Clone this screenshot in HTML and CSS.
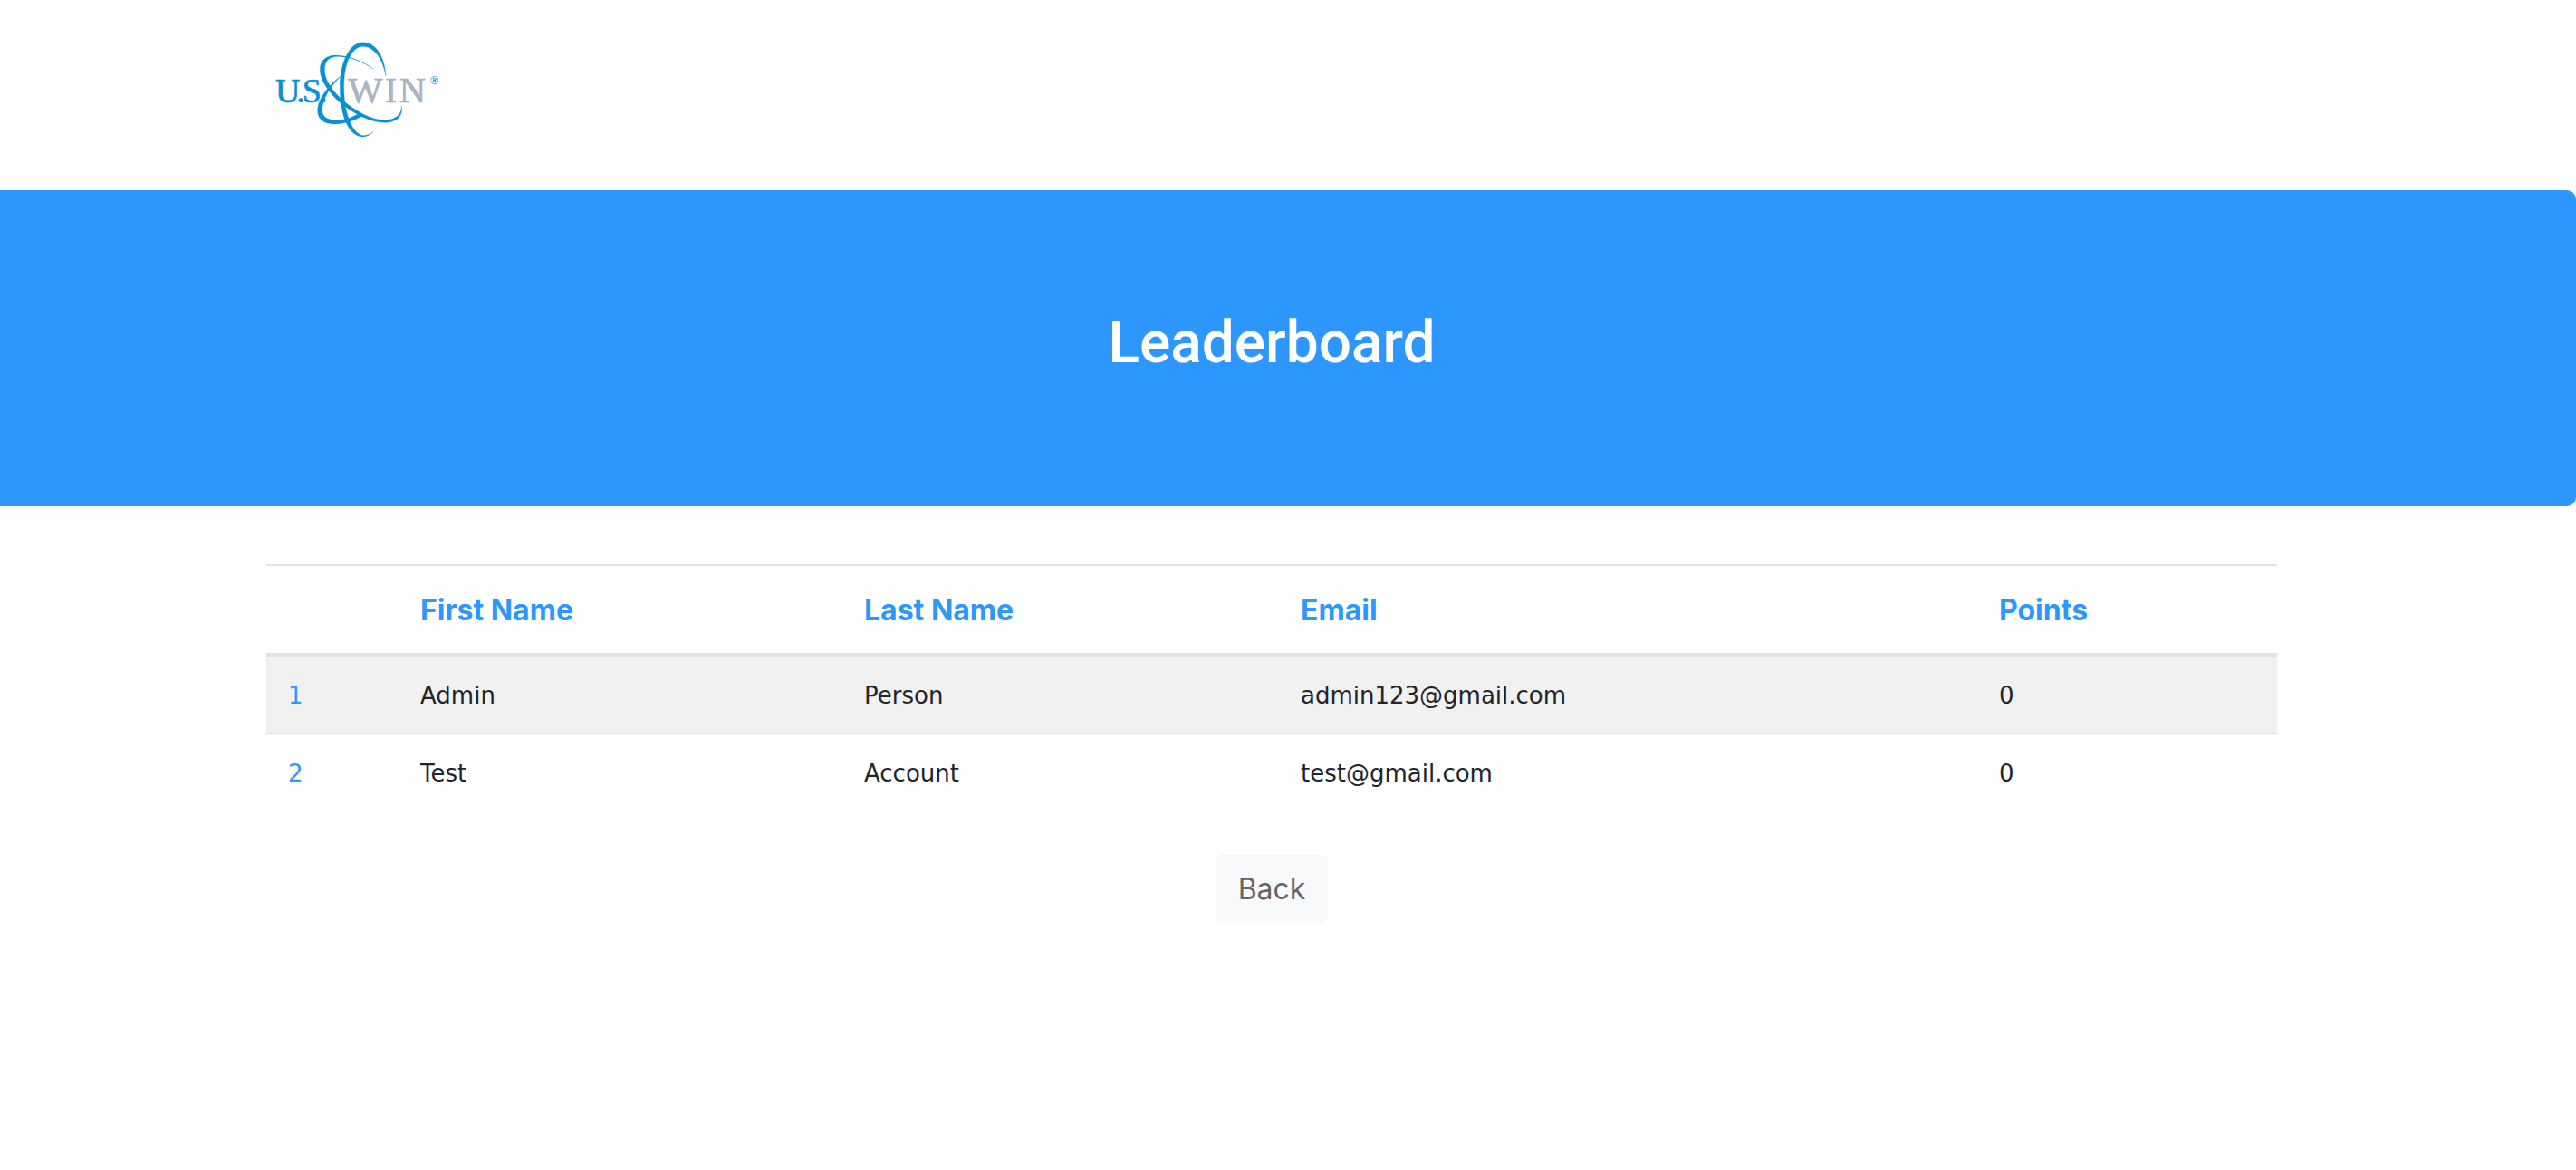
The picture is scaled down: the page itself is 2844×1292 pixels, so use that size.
FILE: index.html
```html
<!DOCTYPE html>
<html lang="en">
<head>
<meta charset="utf-8">
<title>Leaderboard</title>
<link rel="stylesheet" href="styles.css">
</head>
<body>
<header class="site-header">
  <a class="logo" href="#" aria-label="U.S. WIN home">
    <svg viewBox="0 0 660 420" width="220" height="140" role="img" aria-label="U.S. WIN">
      <g class="logo-orbits">
        <path d="M438 162C434 96 404 50 362 50C318 50 286 116 286 198C286 300 318 363 362 363C376 363 388 356 396 346C386 356 374 360 362 359C326 352 299 284 299 198C299 122 324 64 362 64C398 64 428 104 438 162Z"/>
        <path d="M396 138C364 114 316 94 272 93C238 93 220 112 220 140C220 188 274 250 342 288C382 310 418 318 448 315C480 310 494 292 490 262C490 288 474 304 444 307C414 310 384 300 352 282C286 244 236 190 235 142C235 112 250 98 280 97C322 98 364 116 396 138Z"/>
        <path d="M292 160C246 192 212 242 212 276C212 306 234 321 270 321C302 320 340 308 364 291L350 285C322 302 298 308 276 308C244 308 227 298 227 274C228 240 252 196 292 160Z"/>
      </g>
      <text class="logo-us" x="72 142 161 216" y="248">U.S.</text>
      <text class="logo-win" x="312 434 482" y="248">WIN</text>
      <text class="logo-mark" x="584" y="188">®</text>
    </svg>
  </a>
</header>
<section class="banner">
  <h1 class="banner-title">Leaderboard</h1>
</section>
<main class="content">
  <table class="board">
    <colgroup><col class="col-rank"><col class="col-first"><col class="col-last"><col class="col-email"><col></colgroup>
    <thead>
      <tr><th></th><th scope="col">First Name</th><th scope="col">Last Name</th><th scope="col">Email</th><th scope="col">Points</th></tr>
    </thead>
    <tbody>
      <tr><td class="rank">1</td><td>Admin</td><td>Person</td><td>admin123@gmail.com</td><td>0</td></tr>
      <tr><td class="rank">2</td><td>Test</td><td>Account</td><td>test@gmail.com</td><td>0</td></tr>
    </tbody>
  </table>
  <button class="back" type="button">Back</button>
</main>
</body>
</html>
```
FILE: styles.css
```css
* { box-sizing: border-box; }
body {
  margin: 0;
  background: #fff;
  color: #212529;
  font-family: Inter, sans-serif;
}
.site-header {
  height: 210px;
  width: 100%;
  max-width: 2316px;
  margin: 0 auto;
  padding: 30px 36px 0 16px;
}
.logo { display: inline-block; }
.logo svg { display: block; }
.logo-orbits {
  fill: #0a8fd2;
  stroke: #0a8fd2;
  stroke-width: 1px;
}
.logo text { font-family: "Liberation Serif", serif; }
.logo-us { font-size: 114px; fill: #0a8fd2; stroke: #0a8fd2; stroke-width: 2px; }
.logo-win { font-size: 122px; fill: #a9b4c4; stroke: #a9b4c4; stroke-width: 2px; }
.logo-mark { font-size: 38px; font-weight: 700; fill: #0a8fd2; }
.banner {
  padding: 130px 36px 142px 0;
  background: #2e97fd;
  border-radius: 0 10px 10px 0;
}
.banner-title {
  margin: 0;
  color: #fff;
  font-family: Roboto, sans-serif;
  font-size: 64px;
  font-weight: 500;
  line-height: 77px;
  text-align: center;
}
.content {
  display: flex;
  flex-direction: column;
  align-items: center;
  padding: 64px 36px 64px 0;
}
.board {
  width: 100%;
  max-width: 2220px;
  table-layout: fixed;
  border-collapse: separate;
  border-spacing: 0;
}
.col-rank { width: 146px; }
.col-first { width: 490px; }
.col-last { width: 482px; }
.col-email { width: 771px; }
.board th {
  height: 102px;
  padding: 25px 24px 23px;
  border-top: 2px solid #dee2e6;
  border-bottom: 4px solid #dee2e6;
  color: #2e97fd;
  font-size: 32px;
  font-weight: 700;
  line-height: 48px;
  text-align: left;
}
.board td {
  padding: 22px 24px 20px;
  font-family: "DejaVu Sans", sans-serif;
  font-size: 26px;
  line-height: 42px;
}
.board tbody tr:nth-child(odd) td { background: #f1f1f1; }
.board tbody tr + tr td { border-top: 2px solid #dee2e6; }
.board .rank { color: #2e97fd; }
.back {
  margin-top: 48px;
  padding: 15px 25px 13px;
  border: 0;
  border-radius: 8px;
  background: #f8f9fa;
  color: #666;
  font-family: inherit;
  font-size: 32px;
  line-height: 48px;
}
```
